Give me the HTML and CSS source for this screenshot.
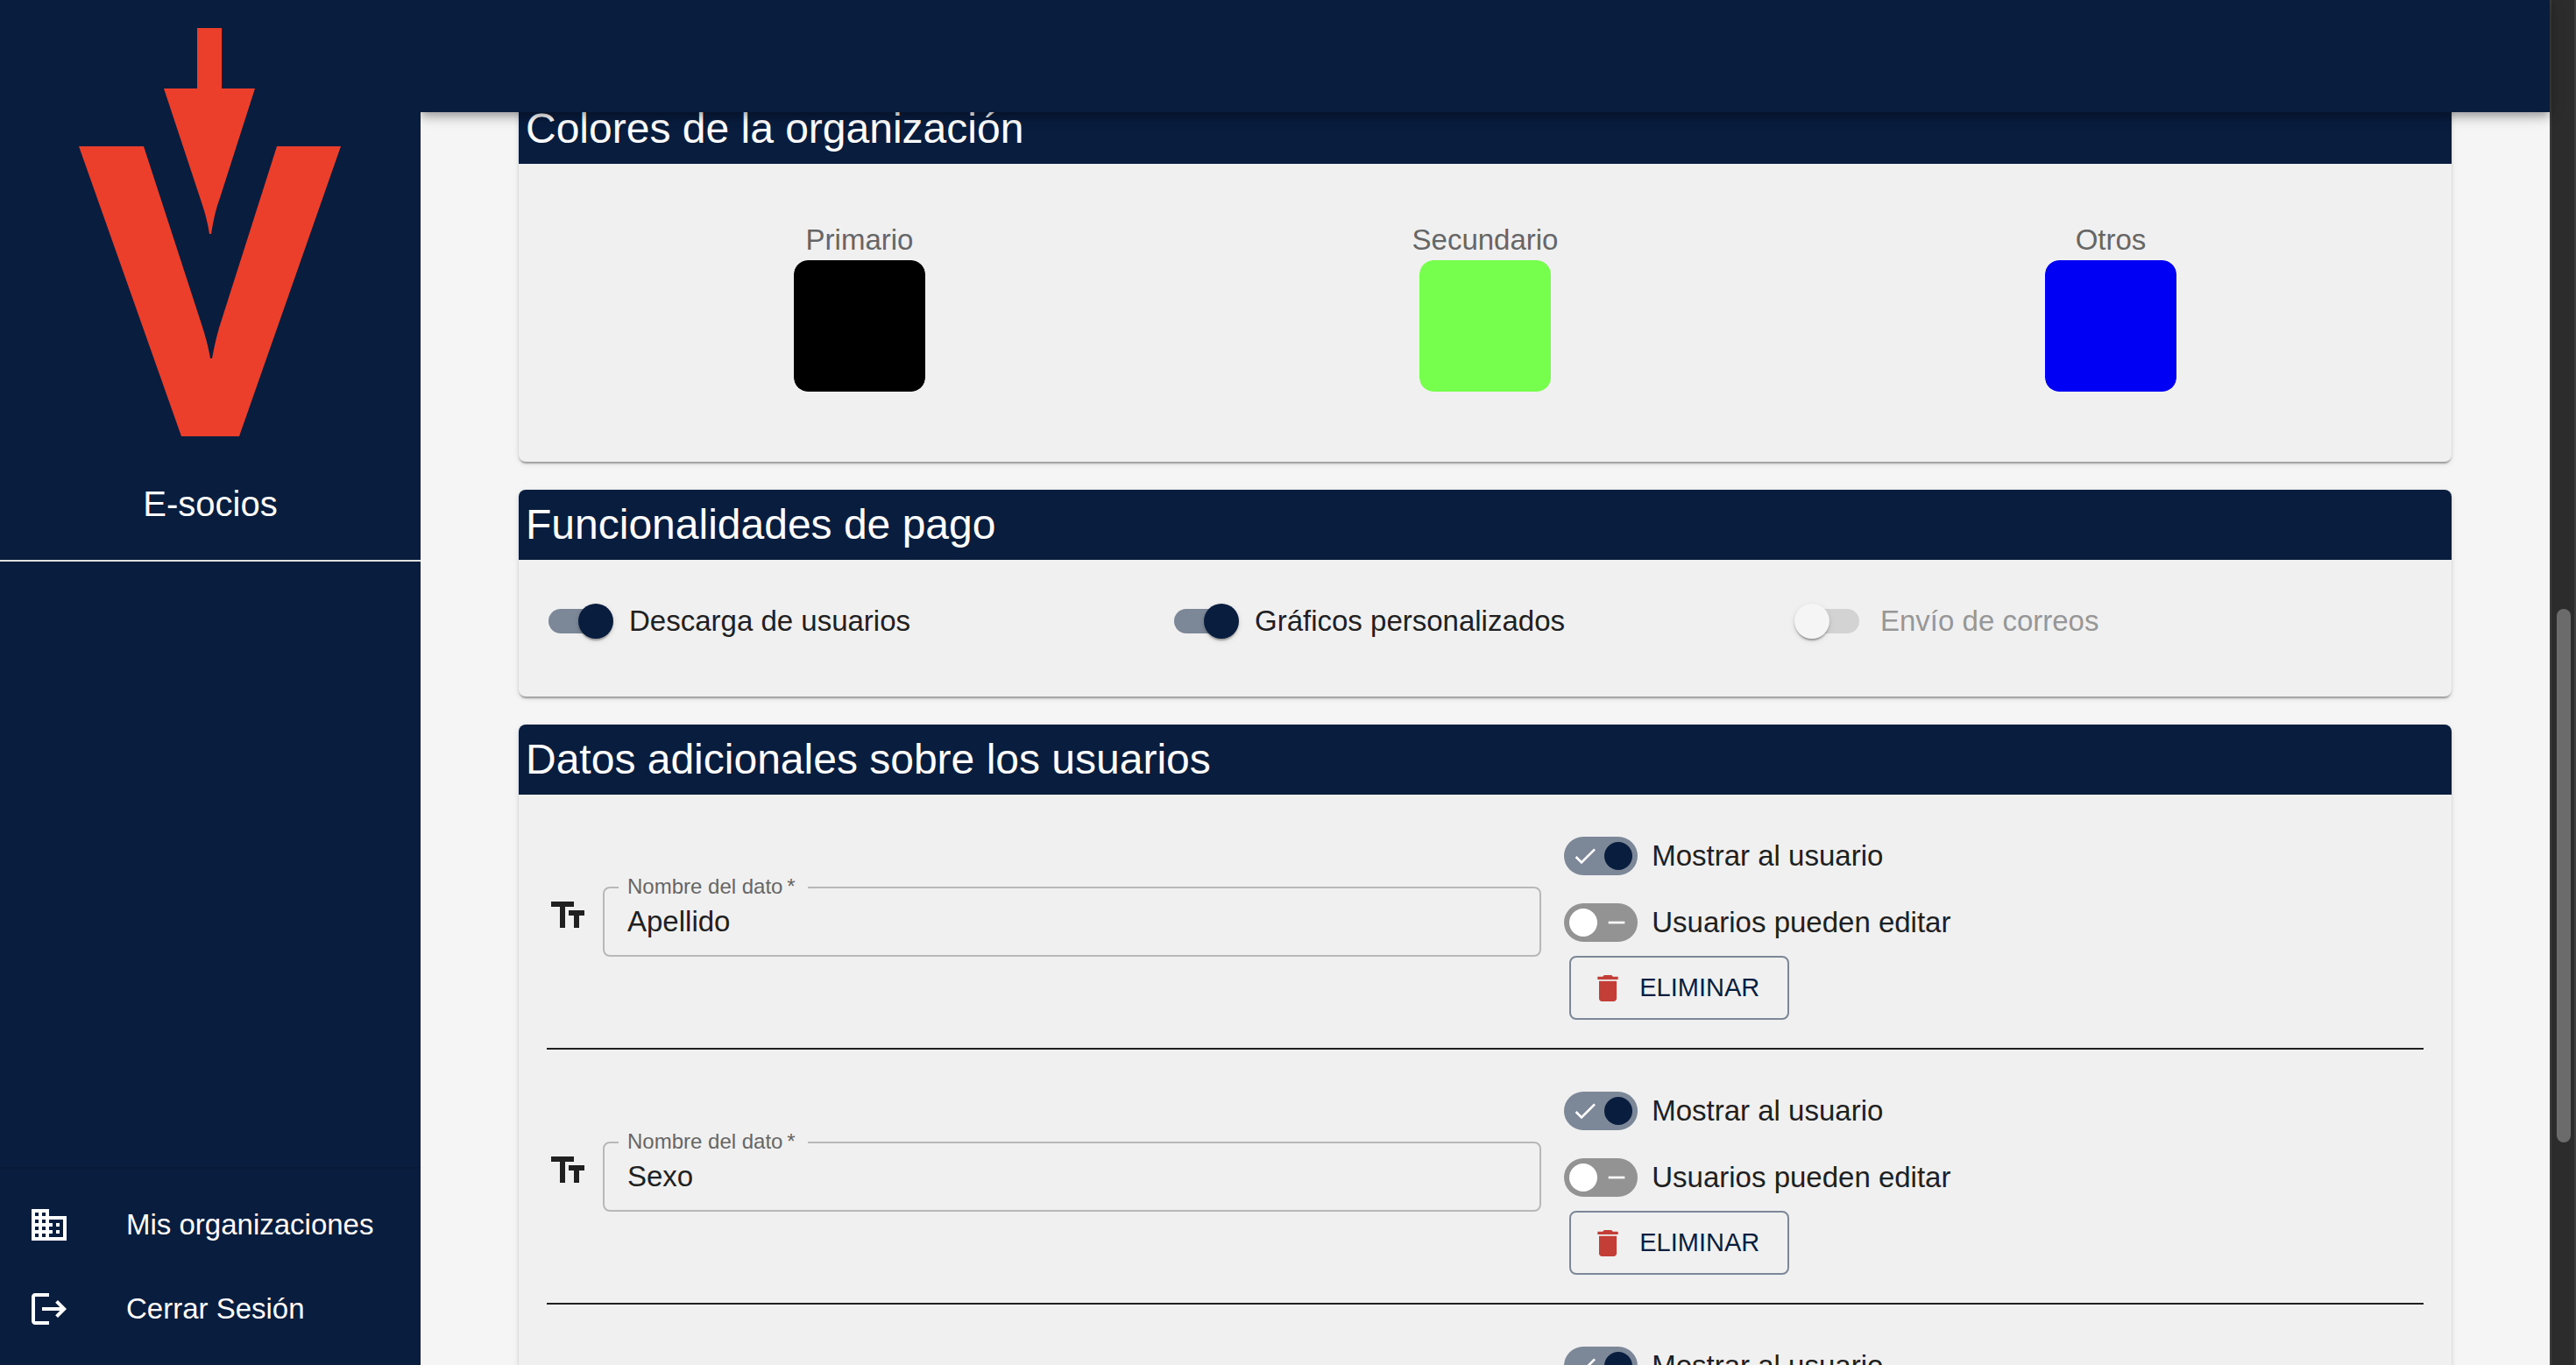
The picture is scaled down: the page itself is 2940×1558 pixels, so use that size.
FILE: index.html
```html
<!DOCTYPE html>
<html lang="es">
<head>
<meta charset="utf-8">
<title>E-socios</title>
<link rel="stylesheet" href="styles.css">
</head>
<body>
<svg class="sprite" aria-hidden="true">
  <symbol id="icon-text" viewBox="0 0 24 24"><path d="M2.5 4v3h5v12h3V7h5V4h-13zm19 5h-9v3h3v7h3v-7h3V9z"/></symbol>
  <symbol id="icon-delete" viewBox="0 0 24 24"><path d="M6 19c0 1.100.9 2 2 2h8c1.100 0 2-.9 2-2V7H6v12zM19 4h-3.500l-1-1h-5l-1 1H5v2h14V4z"/></symbol>
  <symbol id="icon-check" viewBox="0 0 24 24"><path d="M21,7L9,19L3.500,13.500L4.910,12.090L9,16.170L19.590,5.590L21,7Z"/></symbol>
  <symbol id="icon-minus" viewBox="0 0 24 24"><path d="M19,13H5V11H19V13Z"/></symbol>
</svg>
<div class="app">
  <aside class="sidebar">
    <div class="brand">
      <svg class="brand-logo" viewBox="90 32 300 466" aria-hidden="true">
        <path d="M225 32h28v69h38L250 229Q245 242 241 267h-2Q236 248 231 234L187 101h38z"/>
        <path d="M90 167h74L230 370Q237 391 240 409h2Q247 382 253 365L316 167h73L273 498h-66z"/>
      </svg>
      <span class="brand-name">E-socios</span>
    </div>
    <nav class="menu">
      <a class="menu-item" href="#organizaciones">
        <svg class="menu-icon" viewBox="0 0 24 24" aria-hidden="true"><path d="M12 7V3H2v18h20V7H12zM6 19H4v-2h2v2zm0-4H4v-2h2v2zm0-4H4V9h2v2zm0-4H4V5h2v2zm4 12H8v-2h2v2zm0-4H8v-2h2v2zm0-4H8V9h2v2zm0-4H8V5h2v2zm10 12h-8v-2h2v-2h-2v-2h2v-2h-2V9h8v10zm-2-8h-2v2h2v-2zm0 4h-2v2h2v-2z"/></svg>
        Mis organizaciones
      </a>
      <a class="menu-item" href="#salir">
        <svg class="menu-icon" viewBox="0 0 24 24" aria-hidden="true"><path d="M17 7l-1.410 1.410L18.170 11H8v2h10.170l-2.580 2.580L17 17l5-5zM4 5h8V3H4c-1.100 0-2 .9-2 2v14c0 1.100.9 2 2 2h8v-2H4V5z"/></svg>
        Cerrar Sesión
      </a>
    </nav>
  </aside>

  <div class="page">
    <header class="topbar"></header>
    <main class="content">
      <section class="card">
        <h2 class="card-title">Colores de la organización</h2>
        <div class="columns colors">
          <label class="color">Primario<input class="swatch" type="color" value="#000000"></label>
          <label class="color">Secundario<input class="swatch" type="color" value="#77ff4d"></label>
          <label class="color">Otros<input class="swatch" type="color" value="#0000f5"></label>
        </div>
      </section>

      <section class="card">
        <h2 class="card-title">Funcionalidades de pago</h2>
        <div class="columns features">
          <label class="option"><input class="switch" type="checkbox" checked>Descarga de usuarios</label>
          <label class="option"><input class="switch" type="checkbox" checked>Gráficos personalizados</label>
          <label class="option option-disabled"><input class="switch" type="checkbox" disabled>Envío de correos</label>
        </div>
      </section>

      <section class="card">
        <h2 class="card-title">Datos adicionales sobre los usuarios</h2>
        <div class="rows">
          <div class="row">
            <div class="row-main">
              <svg class="type-icon" aria-hidden="true"><use href="#icon-text"/></svg>
              <div class="field">
                <input class="field-input" id="dato-1" type="text" value="Apellido">
                <label class="field-label" for="dato-1">Nombre del dato&thinsp;*</label>
              </div>
            </div>
            <div class="row-actions">
              <label class="option"><span class="toggle"><input class="toggle-input" type="checkbox" checked><svg class="toggle-check"><use href="#icon-check"/></svg></span>Mostrar al usuario</label>
              <label class="option"><span class="toggle"><input class="toggle-input" type="checkbox"><svg class="toggle-minus"><use href="#icon-minus"/></svg></span>Usuarios pueden editar</label>
              <button class="delete" type="button"><svg class="delete-icon" aria-hidden="true"><use href="#icon-delete"/></svg>ELIMINAR</button>
            </div>
          </div>
          <div class="row">
            <div class="row-main">
              <svg class="type-icon" aria-hidden="true"><use href="#icon-text"/></svg>
              <div class="field">
                <input class="field-input" id="dato-2" type="text" value="Sexo">
                <label class="field-label" for="dato-2">Nombre del dato&thinsp;*</label>
              </div>
            </div>
            <div class="row-actions">
              <label class="option"><span class="toggle"><input class="toggle-input" type="checkbox" checked><svg class="toggle-check"><use href="#icon-check"/></svg></span>Mostrar al usuario</label>
              <label class="option"><span class="toggle"><input class="toggle-input" type="checkbox"><svg class="toggle-minus"><use href="#icon-minus"/></svg></span>Usuarios pueden editar</label>
              <button class="delete" type="button"><svg class="delete-icon" aria-hidden="true"><use href="#icon-delete"/></svg>ELIMINAR</button>
            </div>
          </div>
          <div class="row">
            <div class="row-main"></div>
            <div class="row-actions">
              <label class="option"><span class="toggle"><input class="toggle-input" type="checkbox" checked><svg class="toggle-check"><use href="#icon-check"/></svg></span>Mostrar al usuario</label>
            </div>
          </div>
        </div>
      </section>
    </main>
  </div>

  <div class="scrollbar" aria-hidden="true"><div class="scrollbar-thumb"></div></div>
</div>
</body>
</html>
```
FILE: styles.css
```css
:root {
  --navy: #091d3f;
  --ink: #202020;
  --card: #f0f0f0;
}

*, *::before, *::after { box-sizing: border-box; }

body {
  margin: 0;
  font-family: "Liberation Sans", Arial, sans-serif;
  font-size: 33px;
  line-height: 48px;
  color: var(--ink);
  background: #f5f5f5;
}

svg { fill: currentColor; flex: none; }
.sprite { display: none; }

.app {
  display: flex;
  height: 100vh;
  overflow: hidden;
}

/* Sidebar */
.sidebar {
  flex: 0 0 480px;
  z-index: 3;
  display: flex;
  flex-direction: column;
  justify-content: space-between;
  background: var(--navy);
  color: #fff;
}
.brand {
  display: flex;
  flex-direction: column;
  align-items: center;
  gap: 45px;
  padding: 32px 0;
  border-bottom: 2px solid #e0e0e0;
}
.brand-logo { width: 300px; height: 466px; color: #eb3f2b; }
.brand-name { font-size: 40px; line-height: 64px; }
.menu {
  padding: 16px 0;
  border-top: 2px solid #081a38;
}
.menu-item {
  display: flex;
  align-items: center;
  gap: 64px;
  height: 96px;
  padding: 0 32px;
  color: inherit;
  text-decoration: none;
}
.menu-icon { width: 48px; height: 48px; }

/* Page */
.page {
  position: relative;
  flex: 1;
  min-width: 0;
}
.topbar {
  position: absolute;
  inset: 0 0 auto;
  z-index: 2;
  height: 128px;
  background: var(--navy);
  box-shadow: 0 4px 8px -2px rgba(0, 0, 0, .2), 0 8px 10px rgba(0, 0, 0, .14), 0 2px 20px rgba(0, 0, 0, .12);
}
.content {
  display: flex;
  flex-direction: column;
  gap: 32px;
  padding: 107px 112px 0;
}

/* Cards */
.card {
  background: var(--card);
  border-radius: 8px;
  box-shadow: 0 4px 2px -2px rgba(0, 0, 0, .2), 0 2px 2px rgba(0, 0, 0, .14), 0 2px 6px rgba(0, 0, 0, .12);
}
.card-title {
  margin: 0;
  padding: 8px;
  border-radius: 8px 8px 0 0;
  background: var(--navy);
  color: #fff;
  font-size: 48px;
  font-weight: 400;
  line-height: 64px;
}
.columns {
  display: grid;
  grid-template-columns: repeat(3, 1fr);
}
.colors { padding: 64px 32px 80px; }
.features { padding: 32px 32px 48px; }

.color {
  display: flex;
  flex-direction: column;
  align-items: center;
  color: #666;
  line-height: 46px;
}
.swatch {
  width: 150px;
  height: 150px;
  padding: 0;
  border: 0;
  border-radius: 16px;
  overflow: hidden;
  background: none;
  appearance: none;
}
.swatch::-webkit-color-swatch-wrapper { padding: 0; }
.swatch::-webkit-color-swatch { border: 0; border-radius: 16px; }

/* Switches */
.option {
  display: flex;
  align-items: center;
  height: 76px;
  margin-left: -22px;
}
.option-disabled { color: #979797; }
.switch {
  position: relative;
  flex: none;
  appearance: none;
  width: 68px;
  height: 28px;
  margin: 0 24px;
  border-radius: 14px;
  background: #d3d3d3;
}
.switch::before {
  content: "";
  position: absolute;
  top: -6px;
  left: -6px;
  width: 40px;
  height: 40px;
  border-radius: 50%;
  background: #f5f5f5;
  box-shadow: 0 4px 2px -2px rgba(0, 0, 0, .2), 0 2px 2px rgba(0, 0, 0, .14), 0 2px 6px rgba(0, 0, 0, .12);
}
.switch:checked { background: #7c8797; }
.switch:checked::before { left: 34px; background: var(--navy); }

.toggle {
  position: relative;
  flex: none;
  width: 84px;
  height: 44px;
  margin: 0 16px;
  color: #fff;
}
.toggle-input {
  display: block;
  appearance: none;
  width: 100%;
  height: 100%;
  margin: 0;
  border-radius: 22px;
  background: #939393;
}
.toggle-input::before {
  content: "";
  position: absolute;
  top: 6px;
  left: 6px;
  width: 32px;
  height: 32px;
  border-radius: 50%;
  background: #fff;
}
.toggle-input:checked { background: #7c8797; }
.toggle-input:checked::before { left: 46px; background: var(--navy); }
.toggle-check, .toggle-minus {
  position: absolute;
  top: 6px;
  width: 32px;
  height: 32px;
}
.toggle-check { left: 8px; }
.toggle-minus { right: 8px; }

/* Additional data rows */
.rows { padding: 0 32px; }
.row {
  display: flex;
  gap: 32px;
  padding: 32px 0;
  border-bottom: 2px solid var(--ink);
}
.row-main {
  flex: 0 0 53%;
  display: flex;
  align-items: center;
  gap: 16px;
}
.type-icon {
  width: 48px;
  height: 48px;
  margin-bottom: 14px;
}
.field { position: relative; flex: 1; }
.field-input {
  display: block;
  width: 100%;
  height: 80px;
  padding: 0 26px;
  border: 2px solid #b8b8b8;
  border-radius: 8px;
  background: none;
  color: inherit;
  font: inherit;
}
.field-label {
  position: absolute;
  top: -12px;
  left: 18px;
  padding: 0 14px 0 10px;
  background: var(--card);
  color: #666;
  font-size: 24px;
  line-height: 24px;
}
.row-actions {
  display: flex;
  flex-direction: column;
  align-items: flex-start;
}
.delete {
  display: flex;
  align-items: center;
  gap: 16px;
  padding: 10px 32px 10px 22px;
  border: 2px solid #7c8797;
  border-radius: 8px;
  background: none;
  color: var(--navy);
  font-family: inherit;
  font-size: 29px;
  line-height: 49px;
}
.delete-icon { width: 40px; height: 40px; color: #c33e37; }

/* Window scrollbar */
.scrollbar {
  position: relative;
  flex: 0 0 30px;
  border: solid #3e3e3e;
  border-width: 0 2px;
  background: #2c2c2c;
}
.scrollbar-thumb {
  position: absolute;
  top: 44.6%;
  left: 6px;
  width: 16px;
  height: 39.1%;
  border-radius: 8px;
  background: #6b6b6b;
}
```
